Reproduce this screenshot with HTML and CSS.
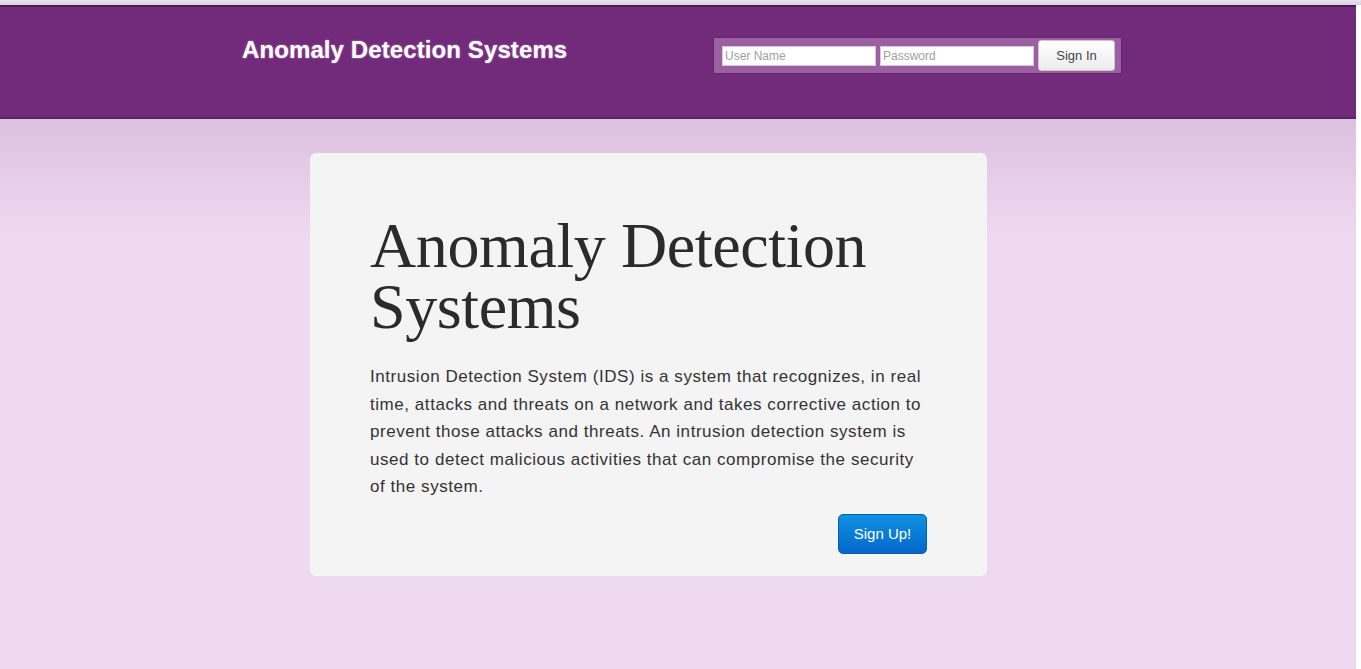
FILE: index.html
```html
<!DOCTYPE html>
<html lang="en">
<head>
<meta charset="utf-8">
<title>Anomaly Detection Systems</title>
<link rel="stylesheet" href="styles.css">
</head>
<body>
<div class="top-strip"></div>
<div class="page">
  <header class="navbar">
    <div class="brand">Anomaly Detection Systems</div>
    <form class="login">
      <input class="field" type="text" placeholder="User Name">
      <input class="field" type="password" placeholder="Password">
      <button class="signin" type="button">Sign In</button>
    </form>
  </header>
  <main class="main">
    <section class="hero">
      <h1>Anomaly Detection Systems</h1>
      <p>Intrusion Detection System (IDS) is a system that recognizes, in real time, attacks and threats on a network and takes corrective action to prevent those attacks and threats. An intrusion detection system is used to detect malicious activities that can compromise the security of the system.</p>
      <div class="actions"><button class="signup" type="button">Sign Up!</button></div>
    </section>
  </main>
</div>
</body>
</html>
```
FILE: styles.css
```css
html, body {
  margin: 0;
  padding: 0;
  background: #ffffff;
}
body {
  font-family: "Liberation Sans", Arial, sans-serif;
}
.top-strip {
  height: 5px;
  background: linear-gradient(#e8e4ee, #d6cfe2);
}
.page {
  width: 1356px;
  height: 664px;
  display: flex;
  flex-direction: column;
  background: #efd9f0;
}
.navbar {
  box-sizing: border-box;
  height: 114px;
  background: #722a7a;
  border-top: 2px solid #4b1a52;
  border-bottom: 2px solid #5f2267;
  display: flex;
  align-items: flex-start;
  padding-left: 242px;
}
.brand {
  color: #ffffff;
  font-weight: bold;
  font-size: 24px;
  line-height: 26px;
  margin-top: 30px;
  width: 471px;
  letter-spacing: 0.1px;
  text-shadow: 0 0 2px rgba(255, 220, 255, 0.6);
}
.login {
  box-sizing: border-box;
  margin: 30px 0 0 0;
  width: 409px;
  height: 37px;
  background: #9b5fa2;
  border: 1px solid #5f2a66;
  border-radius: 2px;
  display: flex;
  align-items: flex-start;
  gap: 4px;
  padding: 2px 0 0 8px;
}
.field {
  box-sizing: border-box;
  margin-top: 6px;
  width: 154px;
  height: 20px;
  border: 1px solid #d8c8da;
  background: #ffffff;
  padding: 0 2px;
  font-family: "Liberation Sans", Arial, sans-serif;
  font-size: 12px;
  color: #555;
}
.field::placeholder {
  color: #a0a0a0;
}
.signin {
  box-sizing: border-box;
  width: 77px;
  height: 31px;
  background: linear-gradient(#ffffff, #ececec);
  border: 1px solid #d0c4d2;
  border-radius: 3px;
  font-family: "Liberation Sans", Arial, sans-serif;
  font-size: 13px;
  color: #444;
  padding: 0;
}
.main {
  flex: 1;
  background: linear-gradient(#dcc1de 0px, #e6cde8 60px, #efd9f0 120px, #efd9f0 100%);
  padding-top: 34px;
}
.hero {
  box-sizing: border-box;
  margin-left: 310px;
  width: 677px;
  height: 423px;
  background: #f4f4f4;
  border-radius: 6px;
  padding: 62px 60px 20px 60px;
}
.hero h1 {
  margin: 0;
  font-family: "Liberation Serif", "Times New Roman", serif;
  font-weight: normal;
  font-size: 64px;
  line-height: 61px;
  color: #2b2b2b;
  letter-spacing: -0.4px;
}
.hero p {
  margin: 26px 0 0 0;
  font-size: 17px;
  letter-spacing: 0.55px;
  line-height: 27.5px;
  color: #333333;
}
.actions {
  display: flex;
  justify-content: flex-end;
  margin-top: 13px;
}
.signup {
  box-sizing: border-box;
  width: 89px;
  height: 40px;
  border: 1px solid #0a5cae;
  border-radius: 5px;
  background: linear-gradient(#0f92e3, #0467c9);
  color: #ffffff;
  font-family: "Liberation Sans", Arial, sans-serif;
  font-size: 15px;
  padding: 0;
}
```
